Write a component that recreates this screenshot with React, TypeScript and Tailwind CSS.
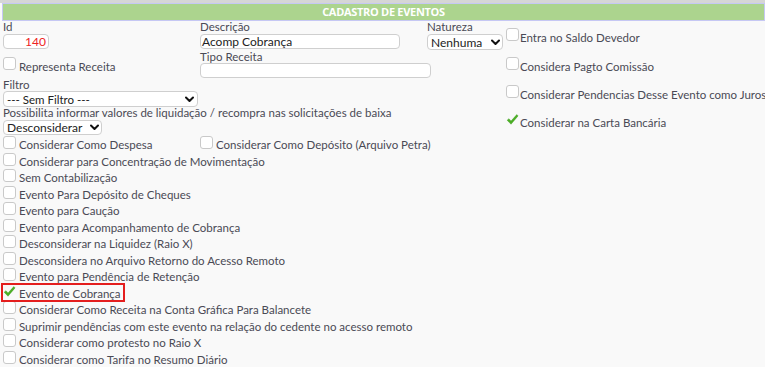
import React from "react";

const Box = ({ checked = false }: { checked?: boolean }) =>
  checked ? (
    <span className="inline-flex w-[13px] h-[13px] shrink-0 items-center justify-center">
      <svg width="14" height="13" viewBox="0 0 14 13">
        <path d="M1.2 7.2 L3.2 5.6 L5.4 8.2 L11.6 1.2 L13 2.6 L5.4 11.6 Z" fill="#4caf25" stroke="#3a9a1a" strokeWidth="0.4" strokeLinejoin="round" />
      </svg>
    </span>
  ) : (
    <span className="inline-block w-[13px] h-[13px] shrink-0 rounded-[3px] border border-[#c9c9c9] bg-white" />
  );

const Chevron = () => (
  <svg width="9" height="7" viewBox="0 0 9 7" className="shrink-0">
    <path d="M1 1.5 L4.5 5 L8 1.5" fill="none" stroke="#111" strokeWidth="2" strokeLinecap="round" strokeLinejoin="round" />
  </svg>
);

const Row = ({ label, checked = false }: { label: string; checked?: boolean }) => (
  <div className="flex items-start h-[16.5px] gap-[3px]">
    <span className="mt-[1px] flex"><Box checked={checked} /></span>
    <span className="leading-[13px] mt-[3px] whitespace-nowrap">{label}</span>
  </div>
);

const RightCheck = ({ label, checked = false, h }: { label: string; checked?: boolean; h: string }) => (
  <div className={`flex items-start gap-[1px] ${h}`}>
    <Box checked={checked} />
    <span className="leading-[13px] mt-[3px] whitespace-nowrap">{label}</span>
  </div>
);

export default function App() {
  const list = [
    "Considerar para Concentração de Movimentação",
    "Sem Contabilização",
    "Evento Para Depósito de Cheques",
    "Evento para Caução",
    "Evento para Acompanhamento de Cobrança",
    "Desconsiderar na Liquidez (Raio X)",
    "Desconsidera no Arquivo Retorno do Acesso Remoto",
    "Evento para Pendência de Retenção",
  ];
  const list2 = [
    "Considerar Como Receita na Conta Gráfica Para Balancete",
    "Suprimir pendências com este evento na relação do cedente no acesso remoto",
    "Considerar como protesto no Raio X",
    "Considerar como Tarifa no Resumo Diário",
  ];
  return (
    <div
      className="w-[765px] h-[367px] overflow-hidden bg-[#f9f9f9] text-[#4a4a55] text-[11.5px]"
      style={{ fontFamily: 'Lato, "Open Sans", sans-serif' }}
    >
      <div className="h-[3px] bg-[#d6d6d6]" />
      <div
        className="ml-[2px] h-[18px] border border-[#c6c8f4] bg-[#acd48e] flex items-center justify-center text-white font-bold text-[11px] tracking-[-0.3px]"
        style={{ fontFamily: '"Open Sans", sans-serif' }}
      >
        CADASTRO DE EVENTOS
      </div>
      <div className="flex h-[114px]">
        {/* left area */}
        <div className="w-[504px] shrink-0">
          <div className="flex h-[29px]">
            <div className="w-[200px] pl-[3px] shrink-0">
              <div className="leading-[12px]">Id</div>
              <div className="mt-[1px] w-[46px] h-[15px] bg-white border border-[#cfcfcf] rounded-[4px] text-right pr-[2px] leading-[13px] text-[#ee2222] text-[12px]">140</div>
            </div>
            <div className="w-[227px] shrink-0">
              <div className="leading-[12px]">Descrição</div>
              <div className="mt-[1px] w-[200px] h-[15px] bg-white border border-[#cfcfcf] rounded-[4px] pl-[1px] leading-[13px] text-[#222] text-[12px]">Acomp Cobrança</div>
            </div>
            <div className="w-[77px] shrink-0">
              <div className="leading-[12px]">Natureza</div>
              <div className="mt-[1px] w-[76px] h-[16px] bg-white border border-[#cfcfcf] rounded-[4px] pl-[3px] pr-[2px] flex items-center justify-between text-[#222] text-[12px]">
                <span className="leading-[13px]">Nenhuma</span>
                <Chevron />
              </div>
            </div>
          </div>
          <div className="flex h-[29px]">
            <div className="w-[200px] pl-[3px] shrink-0 flex items-start gap-[3px] pt-[7px]">
              <Box />
              <span className="leading-[13px] mt-[3px]">Representa Receita</span>
            </div>
            <div className="shrink-0">
              <div className="leading-[12px] mt-[1px]">Tipo Receita</div>
              <div className="w-[231px] h-[15px] bg-white border border-[#cfcfcf] rounded-[4px]" />
            </div>
          </div>
          <div className="pl-[3px]">
            <div className="leading-[12px]">Filtro</div>
            <div className="w-[195px] h-[16px] bg-white border border-[#cfcfcf] rounded-[4px] pl-[3px] pr-[3px] flex items-center justify-between text-[#222] text-[11.5px]">
              <span className="leading-[13px]">--- Sem Filtro ---</span>
              <Chevron />
            </div>
            <div className="leading-[12px] whitespace-nowrap">Possibilita informar valores de liquidação / recompra nas solicitações de baixa</div>
            <div className="mt-[1px] w-[99px] h-[15px] bg-white border border-[#cfcfcf] rounded-[4px] pl-[3px] pr-[2px] flex items-center justify-between text-[#222] text-[12px]">
              <span className="leading-[13px]">Desconsiderar</span>
              <Chevron />
            </div>
          </div>
        </div>
        {/* right column */}
        <div className="pt-[7px] pl-[2px]">
          <RightCheck h="h-[29px]" label="Entra no Saldo Devedor" />
          <RightCheck h="h-[28px]" label="Considera Pagto Comissão" />
          <RightCheck h="h-[28px]" label="Considerar Pendencias Desse Evento como Juros" />
          <RightCheck h="h-[16px]" label="Considerar na Carta Bancária" checked />
        </div>
      </div>
      <div className="pl-[3px]">
        <div className="flex">
          <div className="w-[197px] shrink-0"><Row label="Considerar Como Despesa" /></div>
          <Row label="Considerar Como Depósito (Arquivo Petra)" />
        </div>
        {list.map((l) => <Row key={l} label={l} />)}
        <div className="relative">
          <Row label="Evento de Cobrança" checked />
          <div className="absolute left-[-2px] top-[-0.5px] w-[124px] h-[18.5px] border-2 border-[#e41e1e]" />
        </div>
        {list2.map((l) => <Row key={l} label={l} />)}
      </div>
    </div>
  );
}
